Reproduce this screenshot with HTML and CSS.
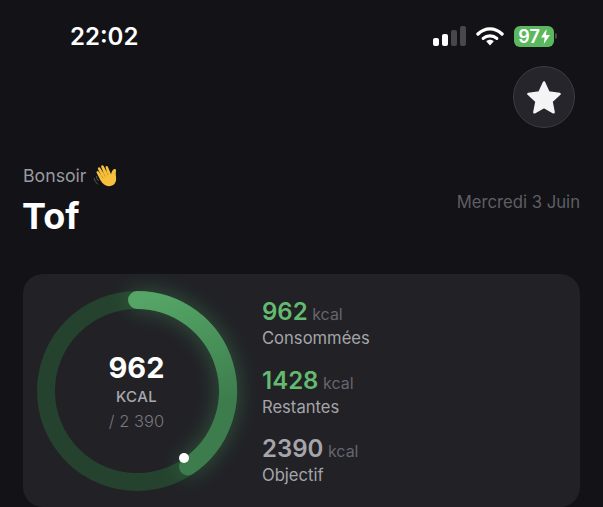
FILE: index.html
```html
<!doctype html>
<html lang="fr">
<head>
<meta charset="utf-8">
<title>Tof</title>
<link rel="stylesheet" href="styles.css">
</head>
<body>
<div class="status">
	<span class="clock">22:02</span>
	<div class="statusIcons">
		<div class="signal">
			<i class="bar1"></i><i class="bar2"></i><i class="bar3"></i><i class="bar4"></i>
		</div>
		<svg class="wifi" width="28" height="20" viewBox="0 0 28 20">
			<path d="M2 8 C9 1.2 19 1.2 26 8" fill="none" stroke="#fff" stroke-width="3.4" stroke-linecap="round"/>
			<path d="M7.2 12.4 C11 8.9 17 8.9 20.8 12.4" fill="none" stroke="#fff" stroke-width="3.2" stroke-linecap="round"/>
			<path d="M10.2 15.2 C12.4 13.2 15.6 13.2 17.8 15.2 L14 19.4 Z" fill="#fff"/>
		</svg>
		<div class="battery">
			<span>97</span>
			<svg width="9" height="15" viewBox="0 0 9 15"><path d="M5.6 0 L0 8.5 H3.6 L2.8 15 L9 6 H5 Z" fill="#fff"/></svg>
		</div>
		<i class="nub"></i>
	</div>
</div>

<div class="actions">
	<button class="starBtn">
		<svg width="36" height="35" viewBox="0 0 36 35"><path d="M18 2.5 L22.6 12.6 L33.6 13.9 L25.5 21.4 L27.6 32.3 L18 26.9 L8.4 32.3 L10.5 21.4 L2.4 13.9 L13.4 12.6 Z" fill="#f4f4f6" stroke="#f4f4f6" stroke-width="2.5" stroke-linejoin="round"/></svg>
	</button>
</div>

<div class="header">
	<div>
		<div class="hello">Bonsoir
			<svg class="hand" width="25" height="25" viewBox="0 0 25 25">
				<path d="M1 15 Q2 19 5 21.5 M3.5 13 Q3.5 16 5.5 18" fill="none" stroke="#555" stroke-width="1"/>
				<path d="M19 22.6 C14.5 24.6 10 22 7.6 17.6 L3.6 9.8 C3 8.4 4.9 7.4 5.8 8.7 L8.4 12.6 L5 6.2 C4.2 4.7 6.4 3.5 7.3 5 L10.8 10.8 L8.2 4 C7.5 2.4 9.7 1.4 10.6 3 L14 9.6 L12.6 4.6 C12.2 3 14.3 2.4 15 3.9 L18 11.2 C18.6 9 19.6 6.8 21.2 6 C22.8 5.5 23.4 6.8 23 8 C22.2 11 23.6 14 23 17.4 C22.6 19.6 21.4 21.6 19 22.6 Z" fill="#f6bf3c"/>
				<path d="M8.4 12.6 L10 15.2 M10.8 10.8 L12.4 13.6 M14 9.6 L15 12.2" fill="none" stroke="#c98a1e" stroke-width=".8"/>
			</svg>
		</div>
		<h1>Tof</h1>
	</div>
	<div class="date">Mercredi 3 Juin</div>
</div>

<div class="card">
	<div class="ring">
		<svg width="202" height="202" viewBox="0 0 202 202">
			<defs>
				<linearGradient id="arcFill" gradientUnits="userSpaceOnUse" x1="110" y1="10" x2="150" y2="125">
					<stop offset="0" stop-color="#55a566"/>
					<stop offset="1" stop-color="#3d7d4d"/>
				</linearGradient>
			</defs>
			<circle cx="101" cy="101" r="91" fill="none" stroke="#25422e" stroke-width="18"/>
			<path class="arc glow" d="M101 10 A91 91 0 0 1 152 176.4"/>
			<path class="arc" d="M101 10 A91 91 0 0 1 152 176.4"/>
		</svg>
		<i class="dot"></i>
		<div class="ringText">
			<div class="ringNum">962</div>
			<div class="ringUnit">KCAL</div>
			<div class="ringGoal">/ 2 390</div>
		</div>
	</div>
	<div class="stats">
		<div class="stat">
			<div class="line"><b class="green">962</b> <span>kcal</span></div>
			<div class="label">Consommées</div>
		</div>
		<div class="stat">
			<div class="line"><b class="green">1428</b> <span>kcal</span></div>
			<div class="label">Restantes</div>
		</div>
		<div class="stat">
			<div class="line"><b class="grey">2390</b> <span>kcal</span></div>
			<div class="label">Objectif</div>
		</div>
	</div>
</div>
</body>
</html>
```

FILE: styles.css
```css
html, body { height: 100%; }
body { background: #121217; color: #fff; font-family: Inter, "Liberation Sans", sans-serif; margin: 0; overflow: hidden; }

.status { align-items: center; display: flex; height: 46px; justify-content: space-between; padding: 13px 46px 0 70px; }
.clock { font-size: 24px; font-weight: 600; }
.statusIcons { align-items: center; display: flex; }

.signal { align-items: flex-end; display: flex; gap: 3px; height: 20px; margin-right: 10px; }
.signal i { background: #fff; border-radius: 2px; display: block; width: 6px; }
.signal .bar1 { height: 8px; }
.signal .bar2 { height: 12px; }
.signal .bar3 { background: #48484c; height: 16px; }
.signal .bar4 { background: #48484c; height: 20px; }

.wifi { margin-right: 10px; }

.battery { align-items: center; background: #5cb85f; border-radius: 6px; display: flex; gap: 1px; height: 21px; justify-content: center; width: 40px; }
.battery span { font-size: 18px; font-weight: 600; }
.nub { background: #48484c; border-radius: 0 2px 2px 0; display: block; height: 6px; margin-left: 1px; width: 2px; }

.actions { display: flex; justify-content: flex-end; padding: 7px 28px 0 0; }
.starBtn { align-items: center; background: #25252b; border: 1px solid #3c3c42; border-radius: 50%; display: flex; height: 62px; justify-content: center; padding: 0; width: 62px; }

.header { align-items: center; display: flex; justify-content: space-between; padding: 35px 23px 0; }
.hello { align-items: center; color: #9a9aa0; display: flex; font-size: 17.7px; gap: 6px; }
h1 { font-size: 36px; font-weight: 700; line-height: 44px; margin: 6px 0 0 -1px; }
.date { color: #5f5f65; font-size: 16.7px; margin-top: 2px; }

.card { background: #212126; border-radius: 20px; display: flex; margin: 36px 23px 0; padding: 16px 13px 15px; }

.ring { display: grid; height: 202px; place-items: center; position: relative; width: 202px; }
.ring svg { display: block; overflow: visible; }
.ring > * { grid-area: 1 / 1; }
.arc { fill: none; stroke: url(#arcFill); stroke-linecap: round; stroke-width: 18; }
.glow { filter: blur(11px); opacity: .4; stroke: #4caf63; }
.dot { background: #fff; border-radius: 50%; height: 10px; left: 143px; position: absolute; top: 163px; width: 10px; }
.ringText { margin-right: 1px; text-align: center; }
.ringNum { font-size: 29px; font-weight: 700; line-height: 34px; }
.ringUnit { color: #a9a9ae; font-size: 15px; font-weight: 500; letter-spacing: .4px; line-height: 20px; margin-top: 2px; }
.ringGoal { color: #77777d; font-size: 16.5px; font-weight: 300; line-height: 22px; margin-top: 3px; }

.stats { display: flex; flex-direction: column; gap: 17.5px; margin: 7px 0 0 24px; }
.line { font-size: 16px; line-height: 30px; }
.line b { font-size: 24px; font-weight: 600; }
.line span { color: #66666c; }
.green { color: #63bb6f; }
.grey { color: #a5a5aa; }
.label { color: #a5a5aa; font-size: 16.6px; line-height: 20px; margin-top: -1px; }
```
